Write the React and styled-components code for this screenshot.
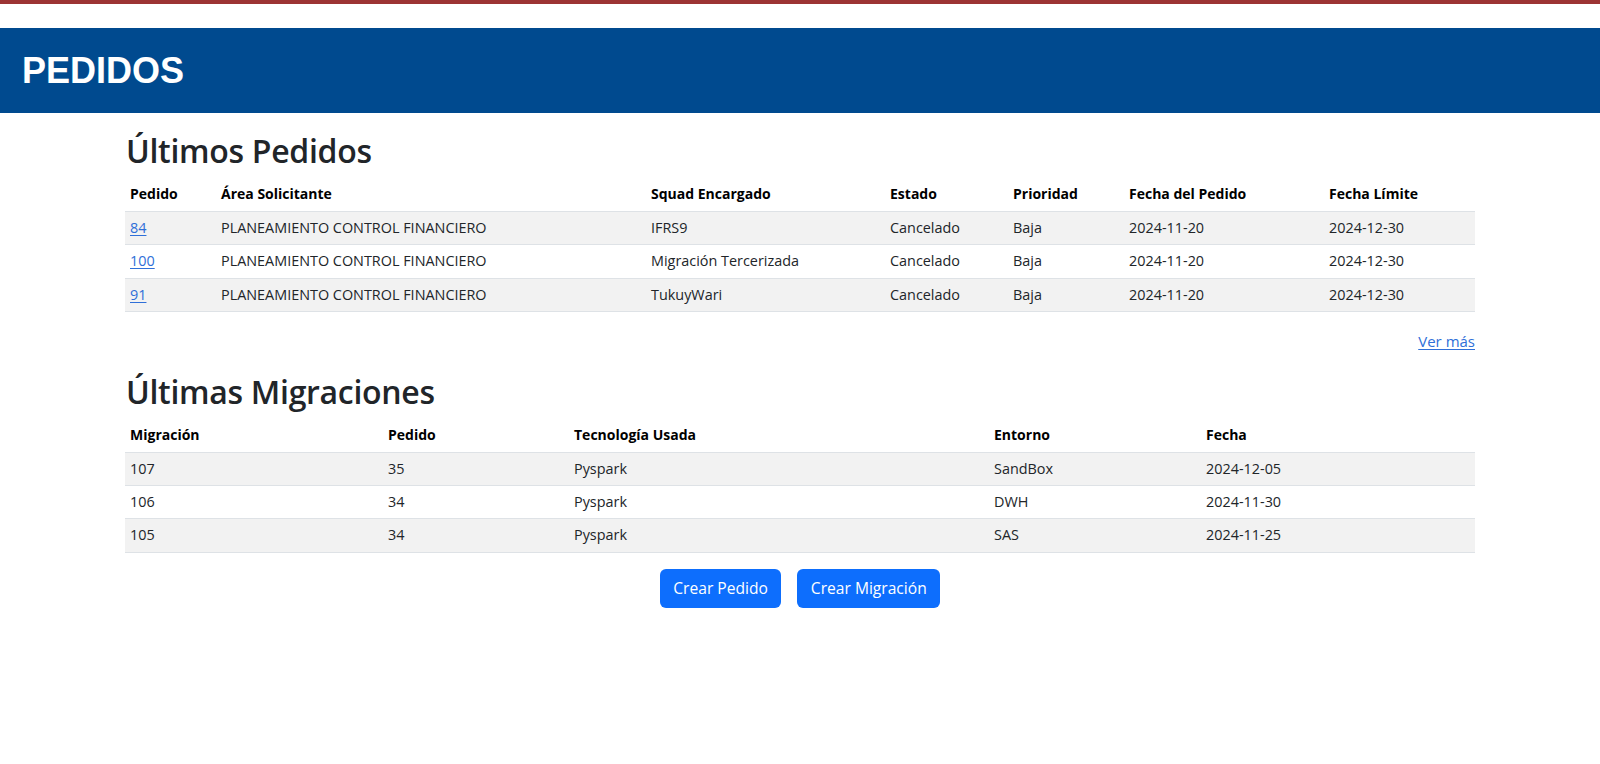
import React from "react";
import styled, { createGlobalStyle } from "styled-components";

const GlobalStyle = createGlobalStyle`
  html, body { margin: 0; padding: 0; background: #ffffff; }
  body {
    font-family: "Open Sans", "Noto Sans", Arial, sans-serif;
    color: #212529;
    -webkit-font-smoothing: antialiased;
  }
  * { box-sizing: border-box; }
`;

const Page = styled.div`
  display: flex;
  flex-direction: column;
  min-height: 764px;
`;

const TopStripe = styled.div`
  height: 4px;
  background: #9c3434;
  margin-bottom: 24px;
`;

const Header = styled.header`
  height: 85px;
  background: #004a8f;
  display: flex;
  align-items: center;
  padding-left: 22px;
`;

const HeaderTitle = styled.h1`
  margin: 0;
  font-family: "Liberation Sans", Arial, sans-serif;
  font-weight: 700;
  font-size: 36px;
  line-height: 1;
  color: #ffffff;
`;

const Main = styled.main`
  width: 1350px;
  margin: 0 auto;
  padding-top: 20px;
  display: flex;
  flex-direction: column;
`;

const SectionTitle = styled.h2`
  margin: 0 0 ${(p) => p.$gap || 8}px 1px;
  font-size: 32px;
  font-weight: 600;
  line-height: 35px;
  color: #212529;
  letter-spacing: -0.3px;
`;

const Table = styled.table`
  width: 100%;
  border-collapse: collapse;
  table-layout: fixed;
  font-size: 14.4px;
`;

const Col = styled.col`
  width: ${(p) => p.$w}px;
`;

const Th = styled.th`
  text-align: left;
  font-weight: 700;
  color: #000000;
  padding: 5px 5px 6px;
  line-height: 22px;
  font-size: 14px;
  border-bottom: 1px solid #dee2e6;
  white-space: nowrap;
`;

const Tr = styled.tr`
  background: ${(p) => (p.$striped ? "#f2f2f2" : "#ffffff")};
`;

const Td = styled.td`
  padding: 5px 5px 5.3px;
  line-height: 22px;
  color: #212529;
  border-bottom: 1px solid #dee2e6;
  white-space: nowrap;
`;

const Link = styled.a`
  color: #2f6fd8;
  text-decoration: underline;
  text-underline-offset: 2px;
  cursor: pointer;
`;

const MoreRow = styled.div`
  display: flex;
  justify-content: flex-end;
  padding-top: 18px;
  margin-bottom: 22px;
  font-size: 15px;
  line-height: 22px;
`;

const Actions = styled.div`
  display: flex;
  justify-content: center;
  gap: 16px;
  margin-top: 16px;
`;

const Button = styled.button`
  height: 39px;
  padding: 0 13.5px;
  border: none;
  border-radius: 6px;
  background: #0d6efd;
  color: #ffffff;
  font-family: inherit;
  font-size: 15.6px;
  cursor: pointer;
`;

const pedidosCols = [91, 430, 239, 123, 116, 200, 151];
const pedidosHead = [
  "Pedido",
  "Área Solicitante",
  "Squad Encargado",
  "Estado",
  "Prioridad",
  "Fecha del Pedido",
  "Fecha Límite",
];
const pedidos = [
  ["84", "PLANEAMIENTO CONTROL FINANCIERO", "IFRS9", "Cancelado", "Baja", "2024-11-20", "2024-12-30"],
  ["100", "PLANEAMIENTO CONTROL FINANCIERO", "Migración Tercerizada", "Cancelado", "Baja", "2024-11-20", "2024-12-30"],
  ["91", "PLANEAMIENTO CONTROL FINANCIERO", "TukuyWari", "Cancelado", "Baja", "2024-11-20", "2024-12-30"],
];

const migCols = [258, 186, 420, 212, 274];
const migHead = ["Migración", "Pedido", "Tecnología Usada", "Entorno", "Fecha"];
const migraciones = [
  ["107", "35", "Pyspark", "SandBox", "2024-12-05"],
  ["106", "34", "Pyspark", "DWH", "2024-11-30"],
  ["105", "34", "Pyspark", "SAS", "2024-11-25"],
];

function DataTable({ cols, head, rows, linkFirst }) {
  return (
    <Table>
      <colgroup>
        {cols.map((w, i) => (
          <Col key={i} $w={w} />
        ))}
      </colgroup>
      <thead>
        <tr>
          {head.map((h) => (
            <Th key={h}>{h}</Th>
          ))}
        </tr>
      </thead>
      <tbody>
        {rows.map((r, i) => (
          <Tr key={i} $striped={i % 2 === 0}>
            {r.map((c, j) => (
              <Td key={j}>{j === 0 && linkFirst ? <Link href="#">{c}</Link> : c}</Td>
            ))}
          </Tr>
        ))}
      </tbody>
    </Table>
  );
}

export default function App() {
  return (
    <Page>
      <GlobalStyle />
      <TopStripe />
      <Header>
        <HeaderTitle>PEDIDOS</HeaderTitle>
      </Header>
      <Main>
        <SectionTitle $gap={10}>Últimos Pedidos</SectionTitle>
        <DataTable cols={pedidosCols} head={pedidosHead} rows={pedidos} linkFirst />
        <MoreRow>
          <Link href="#">Ver más</Link>
        </MoreRow>
        <SectionTitle $gap={10}>Últimas Migraciones</SectionTitle>
        <DataTable cols={migCols} head={migHead} rows={migraciones} />
        <Actions>
          <Button>Crear Pedido</Button>
          <Button>Crear Migración</Button>
        </Actions>
      </Main>
    </Page>
  );
}
